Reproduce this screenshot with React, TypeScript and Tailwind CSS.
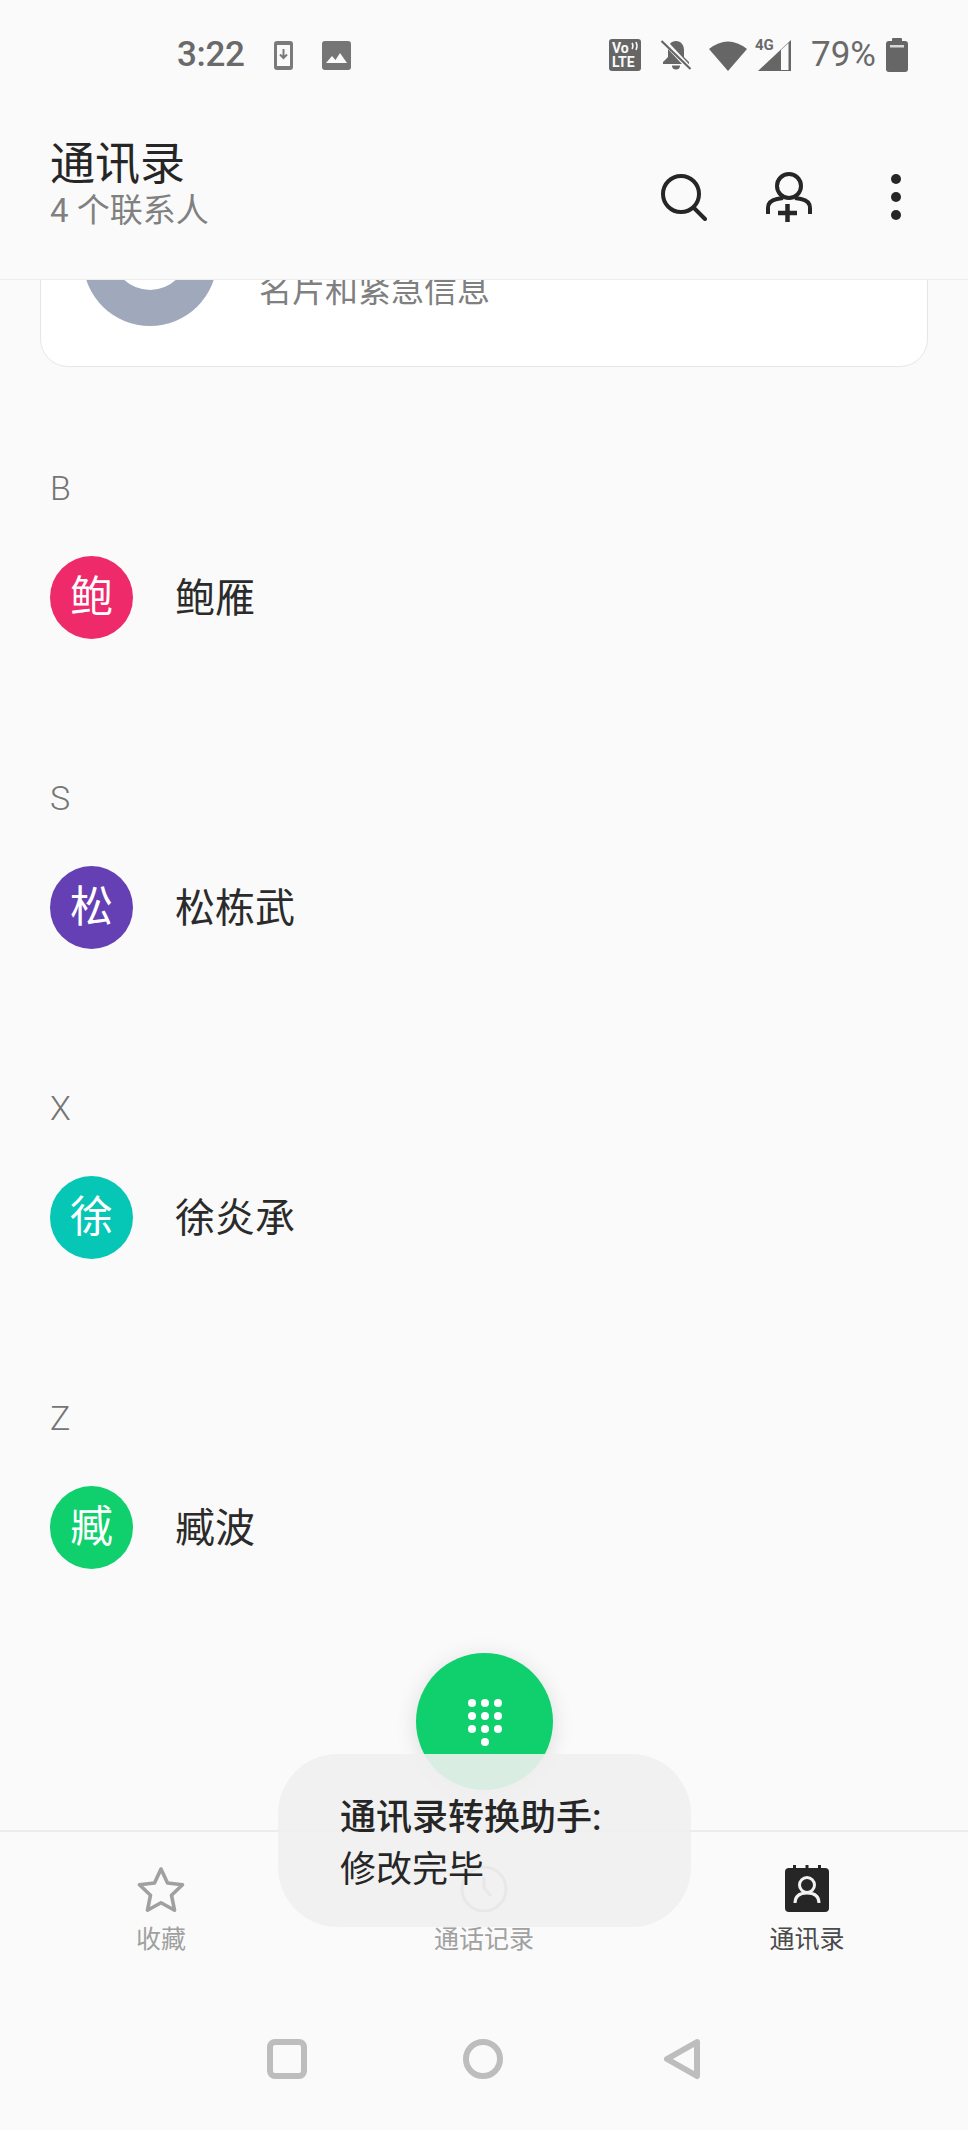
import React from "react";

const cjk = "font-['Roboto','Noto_Sans_CJK_SC',sans-serif]";

function Section({ letter, color, ch, name }: { letter: string; color: string; ch: string; name: string }) {
  return (
    <section className="pt-[101px] pb-[39px] pl-[50px]">
      <div className="h-[40px] text-[34px] leading-[40px] font-light text-[#757575]">{letter}</div>
      <div className="mt-[48px] flex h-[82px] items-center">
        <div className="flex h-[83px] w-[83px] items-center justify-center rounded-full text-[43px] text-white" style={{ backgroundColor: color }}>{ch}</div>
        <div className="ml-[42px] mt-[4px] text-[40px] leading-[48px] text-[#2b2b2b]">{name}</div>
      </div>
    </section>
  );
}

function StatusBar() {
  return (
    <div className="flex h-[110px] items-center pl-[177px] pr-[60px] text-[#6a6a6a]">
      <span className="text-[35px] font-medium leading-[40px] tracking-[-0.3px]">3:22</span>
      <svg className="ml-[29px]" width="19" height="29" viewBox="0 0 19 29">
        <rect width="19" height="29" rx="3" fill="#7a7a7a" />
        <rect x="3" y="4" width="13" height="21" fill="#fafafa" />
        <path d="M9.5 8v9M6 13.5l3.5 3.5 3.5-3.5" stroke="#7a7a7a" strokeWidth="2" fill="none" />
      </svg>
      <svg className="ml-[29px]" width="29" height="29" viewBox="0 0 29 29">
        <rect width="29" height="29" rx="3" fill="#757575" />
        <path d="M4 22l6-7 3.5 4 4.5-7 7 10z" fill="#fafafa" />
      </svg>
      <div className="ml-auto flex items-center">
        <svg width="32" height="32" viewBox="0 0 32 32">
          <rect width="32" height="32" rx="3" fill="#666" />
          <text x="3" y="14" fontSize="14" fontWeight="700" fill="#fafafa" fontFamily="Roboto">Vo</text>
          <path d="M23 4q2 3 0 6M27 3q2 4 0 8" stroke="#fafafa" strokeWidth="1.5" fill="none" />
          <text x="3" y="28" fontSize="14" fontWeight="700" fill="#fafafa" fontFamily="Roboto">LTE</text>
        </svg>
        <svg className="ml-[19px]" width="32" height="30" viewBox="0 0 32 30">
          <path d="M16 1c-5 0-8 4-8 9v7l-5 5v2h26v-2l-5-5v-7c0-5-3-9-8-9z" fill="#666" />
          <path d="M12 25.500a4 4 0 0 0 8 0z" fill="#666" />
          <path d="M2 -1l29 31" stroke="#fafafa" strokeWidth="5" />
          <path d="M1.500 1l29 28" stroke="#666" strokeWidth="2.200" />
        </svg>
        <svg className="ml-[17px]" width="38" height="31" viewBox="0 0 38 31">
          <path d="M0 9Q19 -6 38 9L19 31z" fill="#666" />
        </svg>
        <div className="relative ml-[8px] h-[34px] w-[37px]">
          <svg className="absolute bottom-0 right-0" width="35" height="33" viewBox="0 0 35 33">
            <path d="M34 1L1 32h33z" fill="#666" />
            <path d="M24 31V11l7.500-7v27z" fill="#fafafa" />
          </svg>
          <span className="absolute left-0 top-[-2px] text-[15px] font-bold leading-[18px]">4G</span>
        </div>
        <span className="ml-[19px] text-[35px] leading-[40px]">79%</span>
        <svg className="ml-[10px]" width="22" height="34" viewBox="0 0 22 34">
          <rect x="6" width="10" height="4" rx="1" fill="#666" />
          <rect y="3" width="22" height="31" rx="3" fill="#666" />
          <rect x="4" y="7" width="14" height="2.500" fill="#d8d8d8" />
        </svg>
      </div>
    </div>
  );
}

function Header() {
  return (
    <header className="relative z-10 h-[280px] shrink-0 border-b border-[#ededed] bg-[#fafafa]">
      <StatusBar />
      <div className="flex items-start pl-[50px] pr-[67px]">
        <div className="pt-[32px]">
          <div className="h-[46px] text-[45px] leading-[46px] text-[#262626]">通讯录</div>
          <div className="mt-[3px] text-[33px] leading-[40px] text-[#808080]">4 个联系人</div>
        </div>
        <div className="ml-auto flex items-center pt-[62px]">
          <svg width="46" height="48" viewBox="0 0 46 48" fill="none" stroke="#262626" strokeWidth="4">
            <circle cx="20" cy="21" r="18" />
            <path d="M33 35l11 11" strokeLinecap="round" />
          </svg>
          <svg className="ml-[59px]" width="46" height="50" viewBox="0 0 46 50" fill="none" stroke="#262626" strokeWidth="4">
            <circle cx="23" cy="14" r="12" />
            <path d="M2 42v-6c0-5 4-8 9-9l6-1M44 42v-6c0-5-4-8-9-9l-6-1" />
            <path d="M21.500 32v18M12 41h19" strokeWidth="4.500" />
          </svg>
          <div className="ml-[79px] flex flex-col gap-[8px]">
            <span className="h-[10px] w-[10px] rounded-full bg-[#262626]" />
            <span className="h-[10px] w-[10px] rounded-full bg-[#262626]" />
            <span className="h-[10px] w-[10px] rounded-full bg-[#262626]" />
          </div>
        </div>
      </div>
    </header>
  );
}

function TabBar() {
  return (
    <div className="grid h-[150px] shrink-0 grid-cols-[322px_324px_322px] border-t-2 border-[#ececec]">
      <div className="flex flex-col items-center pt-[33px]">
        <svg width="48" height="47" viewBox="0 0 48 47">
          <path d="M24 4l6.500 14 15 1.800-11 10.400 3 15L24 37.700 10.500 45.200l3-15-11-10.400 15-1.800z" fill="none" stroke="#a0a0a0" strokeWidth="3.600" strokeLinejoin="round" />
        </svg>
        <div className="mt-[12px] text-[25px] leading-[32px] text-[#a0a0a0]">收藏</div>
      </div>
      <div className="flex flex-col items-center pt-[33px]">
        <svg width="48" height="47" viewBox="0 0 48 47" fill="none" stroke="#a0a0a0" strokeWidth="3">
          <circle cx="24" cy="24" r="22" />
          <path d="M24 12v11l7 8" />
        </svg>
        <div className="mt-[12px] text-[25px] leading-[32px] text-[#a0a0a0]">通话记录</div>
      </div>
      <div className="flex flex-col items-center pt-[33px]">
        <svg width="44" height="47" viewBox="0 0 44 47">
          <path d="M8 0h3v5H8zM20.500 0h3v5h-3zM33 0h3v5h-3z" fill="#262626" />
          <rect y="3" width="44" height="44" rx="4" fill="#262626" />
          <circle cx="22" cy="20" r="7.500" fill="none" stroke="#f2f2f2" strokeWidth="3" />
          <path d="M10 38c0-7 5-10 12-10s12 3 12 10" fill="none" stroke="#f2f2f2" strokeWidth="3" />
        </svg>
        <div className="mt-[12px] text-[25px] leading-[32px] text-[#4a4a4a]">通讯录</div>
      </div>
    </div>
  );
}

function NavBar() {
  return (
    <div className="flex h-[150px] shrink-0 items-start justify-center pt-[58px]">
      <div className="flex items-center">
        <div className="h-[40px] w-[40px] rounded-[8px] border-[6px] border-[#bdbdbd]" />
        <div className="ml-[156px] h-[40px] w-[40px] rounded-full border-[6px] border-[#bdbdbd]" />
        <svg className="ml-[160px]" width="38" height="42" viewBox="0 0 38 42">
          <path d="M34 4L4 21l30 17z" fill="none" stroke="#bdbdbd" strokeWidth="6" strokeLinejoin="round" />
        </svg>
      </div>
    </div>
  );
}

export default function App() {
  return (
    <div className={`relative flex h-[2130px] w-[968px] flex-col overflow-hidden bg-[#fafafa] ${cjk}`}>
      <Header />
      <main className="min-h-0 flex-1 overflow-hidden">
        <div className="mx-[40px] mt-[-116px] flex h-[203px] items-center rounded-[28px] border border-[#e6e6e6] bg-white pl-[42px]">
          <div className="mt-[-13px] flex h-[134px] w-[134px] items-center justify-center rounded-full bg-[#a0a8bb]">
            <div className="mt-[-14px] h-[76px] w-[76px] rounded-full bg-white" />
          </div>
          <div className="ml-[42px] mt-[50px] text-[33px] leading-[40px] text-[#808080]">名片和紧急信息</div>
        </div>
        <Section letter="B" color="#ee2a6b" ch="鲍" name="鲍雁" />
        <Section letter="S" color="#6440b4" ch="松" name="松栋武" />
        <Section letter="X" color="#06c7b6" ch="徐" name="徐炎承" />
        <Section letter="Z" color="#0fd06c" ch="臧" name="臧波" />
      </main>
      <TabBar />
      <NavBar />

      <div className="absolute left-[416px] top-[1653px] flex h-[137px] w-[137px] items-center justify-center rounded-full bg-[#10d06e] shadow-[0_4px_22px_rgba(0,0,0,0.12)]">
        <svg width="36" height="48" viewBox="0 0 36 48" fill="white">
          <circle cx="5" cy="5" r="4" /><circle cx="18" cy="5" r="4" /><circle cx="31" cy="5" r="4" />
          <circle cx="5" cy="18" r="4" /><circle cx="18" cy="18" r="4" /><circle cx="31" cy="18" r="4" />
          <circle cx="5" cy="31" r="4" /><circle cx="18" cy="31" r="4" /><circle cx="31" cy="31" r="4" />
          <circle cx="18" cy="44" r="4" />
        </svg>
      </div>

      <div className="absolute left-[278px] top-[1754px] h-[173px] w-[413px] rounded-[60px] bg-[#f0f0f0]/90 pl-[62px] pt-[38px] text-[36px] leading-[52px] text-[#262626]">
        <div className="font-medium">通讯录转换助手:</div>
        <div>修改完毕</div>
      </div>
    </div>
  );
}
